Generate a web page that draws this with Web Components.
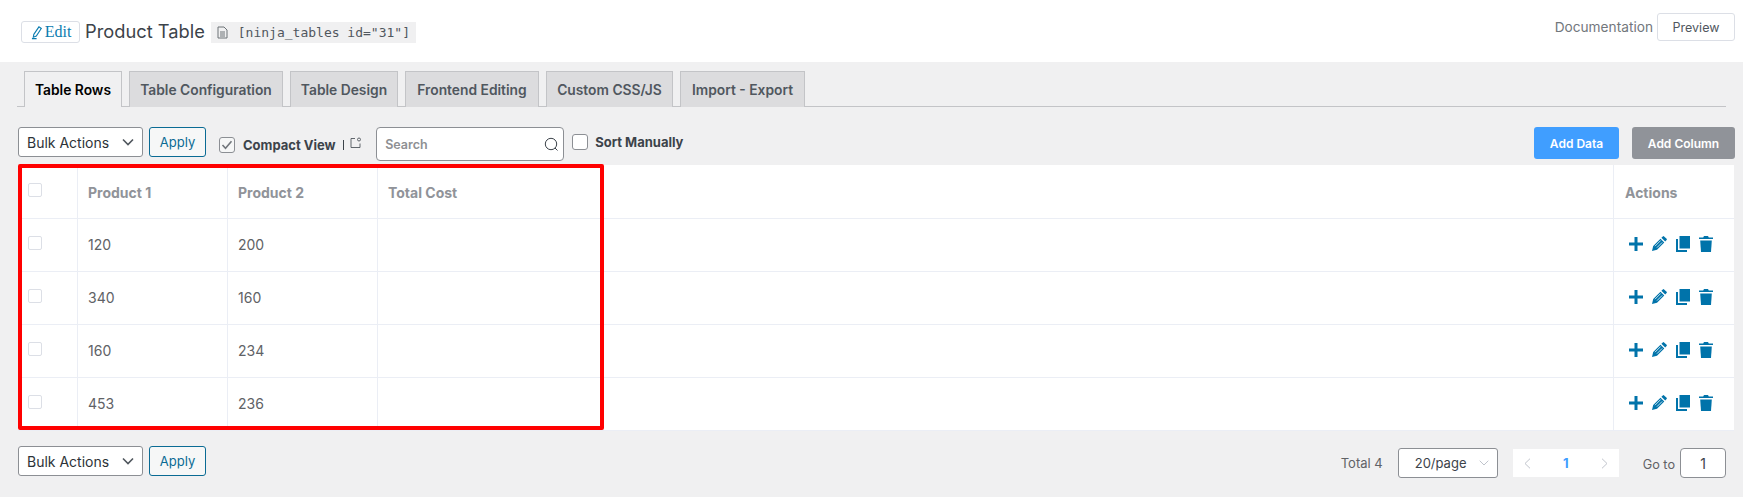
<!DOCTYPE html>
<html>
<head>
<meta charset="utf-8">
<title>Product Table</title>
<style>
  html, body { margin: 0; padding: 0; background: #f0f0f1; }
  body { font-family: Inter, "Liberation Sans", sans-serif; width: 1743px; height: 497px; overflow: hidden; }
</style>
</head>
<body>
<table-header></table-header>
<table-tabs></table-tabs>
<table-toolbar></table-toolbar>
<rows-table></rows-table>
<table-footer></table-footer>

<script>
// shared control styles, used by the toolbar and the footer
const bulkStyles = `
  .bulk { display: flex; gap: 6px; }
  .select {
    box-sizing: border-box; width: 125px; height: 30px; background: #fff;
    border: 1px solid #8c8f94; border-radius: 3px; padding: 0 8px;
    display: flex; align-items: center; justify-content: space-between;
    font-size: 14px; color: #2c3338;
  }
  .apply {
    box-sizing: border-box; width: 57px; height: 30px; background: #f6f7f7;
    border: 1px solid #0a6b94; border-radius: 3px; color: #0a6b94;
    font-size: 13px; display: flex; align-items: center; justify-content: center;
  }
`;
const bulkMarkup = `
  <div class="bulk">
    <div class="select">Bulk Actions
      <svg width="12" height="8" viewBox="0 0 12 8" fill="none" stroke="#50575e" stroke-width="1.6"><path d="M1 1.5l5 5 5-5"/></svg>
    </div>
    <div class="apply">Apply</div>
  </div>
`;

class TableHeader extends HTMLElement {
  constructor() {
    super();
    this.attachShadow({ mode: 'open' });
    this.shadowRoot.innerHTML = `
      <style>
        :host { display: flex; box-sizing: border-box; height: 62px; background: #fff; padding: 13px 8px 0 21px; justify-content: space-between; align-items: flex-start; }
        .left { display: flex; align-items: center; height: 30px; margin-top: 3px; }
        .edit {
          box-sizing: border-box; width: 59px; height: 22px; margin-top: 2px; border: 1px solid #dcdfe6; border-radius: 3px;
          display: flex; align-items: center; justify-content: center; padding-left: 1px;
          font: 16px "Liberation Serif", serif; color: #0a7cb0;
        }
        h1 { margin: 0 6px 0 5px; font-weight: 400; font-size: 18.3px; color: #3c434a; }
        .code {
          display: flex; align-items: center; gap: 10px; height: 21px; padding: 0 6px; background: #f0f0f1;
          font: 13px "DejaVu Sans Mono", monospace; color: #50575e; margin-top: 2px;
        }
        .right { display: flex; align-items: center; gap: 4px; }
        .doc { font-size: 13.7px; color: #72777c; }
        .preview {
          box-sizing: border-box; width: 78px; height: 28px; border: 1px solid #dcdfe6; border-radius: 3px;
          display: flex; align-items: center; justify-content: center; font-size: 12.5px; color: #50575e;
        }
      </style>
      <div class="left">
        <div class="edit">
          <svg width="14" height="15" viewBox="0 0 15 15" fill="none" stroke="#0a7cb0" stroke-width="1.2"><path d="M3 9.5L8.5 1.5l2.5 1.7-5.3 8-3.2 1.3zM1 14h5"/></svg>Edit
        </div>
        <h1>Product Table</h1>
        <div class="code">
          <svg width="11" height="13" viewBox="0 0 11 13" fill="none" stroke="#6c7277" stroke-width="1"><path d="M1 1h6l3 3v8H1zM3 6h5M3 8h5M3 10h5"/></svg>
          <span>[ninja_tables id="31"]</span>
        </div>
      </div>
      <div class="right">
        <span class="doc">Documentation</span>
        <div class="preview">Preview</div>
      </div>
    `;
  }
}

class TableTabs extends HTMLElement {
  constructor() {
    super();
    this.attachShadow({ mode: 'open' });
    const names = ['Table Rows', 'Table Configuration', 'Table Design', 'Frontend Editing', 'Custom CSS/JS', 'Import - Export'];
    const widths = [98, 154, 108, 134, 127, 125];
    this.shadowRoot.innerHTML = `
      <style>
        :host { display: flex; box-sizing: border-box; height: 45px; margin: 0 17px; padding: 9px 0 0 7px; gap: 7px; border-bottom: 1px solid #c3c4c7; }
        .tab {
          box-sizing: border-box; height: 36px; background: #dcdcde; border: 1px solid #c3c4c7; border-bottom: 0;
          display: flex; align-items: center; justify-content: center; font-size: 13.8px; font-weight: 600; color: #50575e;
        }
        .tab.on { background: #f0f0f1; color: #000; margin-bottom: -1px; }
      </style>
      ${names.map((n, i) => `<div class="tab${i === 0 ? ' on' : ''}" style="width:${widths[i]}px">${n}</div>`).join('')}
    `;
  }
}

class TableToolbar extends HTMLElement {
  constructor() {
    super();
    this.attachShadow({ mode: 'open' });
    this.shadowRoot.innerHTML = `
      <style>
        ${bulkStyles}
        :host { display: flex; box-sizing: border-box; height: 58px; padding: 20px 8px 0 18px; align-items: flex-start; }
        .box { box-sizing: border-box; width: 16px; height: 16px; border: 1px solid #8c8f94; border-radius: 3px; background: #fff; display: flex; align-items: center; justify-content: center; flex: none; }
        .compact { display: flex; align-items: center; margin: 9px 0 0 13px; font-size: 13px; font-weight: 700; color: #3c434a; height: 17px; }
        .compact .box { background: #f6f7f7; }
        .compact span { margin-left: 8px; }
        .bar { width: 1.5px; height: 10px; background: #3c434a; margin: 0 6px 0 7px; }
        .search {
          box-sizing: border-box; width: 188px; height: 34px; margin-left: 14px; background: #fff; border: 1px solid #8c8f94; border-radius: 4px;
          display: flex; align-items: center; justify-content: space-between; padding: 0 4px 0 8px; font-size: 12.5px; font-weight: 600; color: #8e9093;
        }
        .sort { display: flex; align-items: center; margin: 6px 0 0 8px; font-size: 13px; font-weight: 700; color: #3c434a; gap: 7px; }
        .sort span { padding-top: 1px; }
        .actions { display: flex; gap: 13px; margin-left: auto; }
        .btn { box-sizing: border-box; height: 32px; border-radius: 3px; color: #fff; font-size: 12px; font-weight: 600; display: flex; align-items: center; justify-content: center; }
        .add-data { width: 85px; background: #409eff; }
        .add-col { width: 103px; background: #909399; }
      </style>
      ${bulkMarkup}
      <div class="compact">
        <div class="box"><svg width="12" height="10" viewBox="0 0 12 10" fill="none" stroke="#72777c" stroke-width="1.6"><path d="M1.5 5l3 3.2 6-7"/></svg></div>
        <span>Compact View</span><div class="bar"></div>
        <svg width="12" height="12" viewBox="0 0 12 12" fill="none" stroke="#50575e" stroke-width="0.9" style="margin-top:-4px"><path d="M5 1.5H1v9h9V6.5"/><circle cx="9" cy="2.5" r="1.5"/></svg>
      </div>
      <div class="search">Search
        <svg width="15" height="15" viewBox="0 0 15 15" fill="none" stroke="#3c434a" stroke-width="1"><circle cx="7" cy="7" r="5.7"/><path d="M11 11l2.5 2.5"/></svg>
      </div>
      <div class="sort"><div class="box"></div><span>Sort Manually</span></div>
      <div class="actions">
        <div class="btn add-data">Add Data</div>
        <div class="btn add-col">Add Column</div>
      </div>
    `;
  }
}

class RowsTable extends HTMLElement {
  constructor() {
    super();
    this.attachShadow({ mode: 'open' });
    const data = [['120', '200'], ['340', '160'], ['160', '234'], ['453', '236']];
    const check = '<div class="cell"><div class="check"></div></div>';
    const icons = `
      <div class="cell icons">
        <svg width="14" height="14" viewBox="0 0 14 14" fill="#0073aa"><path d="M5.5 0h3v5.5H14v3H8.5V14h-3V8.5H0v-3h5.5z"/></svg>
        <svg width="15" height="15" viewBox="0 0 15 15" fill="#0073aa"><path d="M10.8.4a1 1 0 0 1 1.3 0l2.5 2.4a1 1 0 0 1 0 1.3l-1.4 1.4-3.8-3.7zM8.5 2.7l3.8 3.7L5 13.7 0 15l1.2-5z"/><path d="M3 10.2l5.7-5.7M5 11.6l5.2-5.2" stroke="#fff" stroke-width="0.8"/></svg>
        <svg width="14" height="16" viewBox="0 0 14 16" fill="#0073aa"><path d="M3.5 0H14v12.5H3.5z"/><path d="M0 3h2v11h9v2H0z"/></svg>
        <svg width="14" height="16" viewBox="0 0 14 16" fill="#0073aa"><path d="M5 0h4l.8 1.5H14v1.6H0V1.5h4.2z"/><path d="M1.2 4.4h11.6L12 16H2z"/></svg>
      </div>`;
    const row = (a, b) => `<div class="row">${check}<div class="cell">${a}</div><div class="cell">${b}</div><div class="cell"></div>${icons}</div>`;
    this.shadowRoot.innerHTML = `
      <style>
        :host { display: block; position: relative; box-sizing: border-box; width: 1716px; margin: 0 0 0 18px; background: #fff; font-size: 14px; color: #606266; }
        .row { display: grid; grid-template-columns: 60px 150px 150px 1fr 120px; height: 53px; border-bottom: 1px solid #ebeef5; box-sizing: border-box; }
        .row.head { color: #909399; font-weight: 700; height: 54px; }
        .cell { display: flex; align-items: center; padding: 0 0 1px 10px; border-right: 1px solid #ebeef5; box-sizing: border-box; }
        .head .cell { padding: 2px 0 0 10px; }
        .cell:last-child { border-right: 0; }
        .head .cell:last-child { padding-left: 11px; }
        .cell:first-child, .head .cell:first-child { align-items: flex-start; padding: 17px 0 0 10px; }
        .head .cell:first-child { padding-top: 18px; }
        .check { box-sizing: border-box; width: 14px; height: 14px; border: 1px solid #dcdfe6; border-radius: 2px; background: #fff; }
        .cell.icons { gap: 9px; padding: 0 0 3px 15px; }
        .frame { position: absolute; left: 0; top: -1px; width: 586px; height: 266px; box-sizing: border-box; border: 4px solid #f00; border-radius: 2px; pointer-events: none; }
      </style>
      <div class="row head">
        ${check}<div class="cell">Product 1</div><div class="cell">Product 2</div><div class="cell">Total Cost</div><div class="cell">Actions</div>
      </div>
      ${data.map(d => row(d[0], d[1])).join('')}
      <div class="frame"></div>
    `;
  }
}

class TableFooter extends HTMLElement {
  constructor() {
    super();
    this.attachShadow({ mode: 'open' });
    this.shadowRoot.innerHTML = `
      <style>
        ${bulkStyles}
        :host { display: flex; box-sizing: border-box; padding: 15px 17px 0 18px; justify-content: space-between; align-items: flex-start; }
        .pager { display: flex; align-items: center; margin-top: 2px; font-size: 13px; color: #606266; }
        .total { margin-right: 15px; }
        .size {
          box-sizing: border-box; width: 100px; height: 30px; background: #fff; border: 1px solid #8c8f94; border-radius: 3px;
          display: flex; align-items: center; justify-content: space-between; padding: 0 8px 0 16px; font-size: 13px; color: #3c434a;
        }
        .pages { box-sizing: border-box; width: 106px; height: 28px; margin: 0 24px 0 15px; background: #fff; display: flex; align-items: center; justify-content: space-between; padding: 0 11px; font-size: 13px; font-weight: 700; color: #409eff; }
        .goto { margin-right: 5px; font-size: 12.7px; padding-top: 2px; }
        .num { box-sizing: border-box; width: 46px; height: 30px; background: #fff; border: 1px solid #8c8f94; border-radius: 4px; display: flex; align-items: center; justify-content: center; font-size: 14px; color: #3c434a; }
      </style>
      ${bulkMarkup}
      <div class="pager">
        <span class="total">Total 4</span>
        <div class="size">20/page
          <svg width="10" height="6" viewBox="0 0 10 6" fill="none" stroke="#c0c4cc" stroke-width="1"><path d="M.7.7L5 5l4.3-4.3"/></svg>
        </div>
        <div class="pages">
          <svg width="7" height="11" viewBox="0 0 7 11" fill="none" stroke="#c0c4cc" stroke-width="1"><path d="M6 .7L1 5.5l5 4.8"/></svg>
          1
          <svg width="7" height="11" viewBox="0 0 7 11" fill="none" stroke="#c0c4cc" stroke-width="1"><path d="M1 .7l5 4.8-5 4.8"/></svg>
        </div>
        <span class="goto">Go to</span>
        <div class="num">1</div>
      </div>
    `;
  }
}

customElements.define('table-header', TableHeader);
customElements.define('table-tabs', TableTabs);
customElements.define('table-toolbar', TableToolbar);
customElements.define('rows-table', RowsTable);
customElements.define('table-footer', TableFooter);
</script>
</body>
</html>
